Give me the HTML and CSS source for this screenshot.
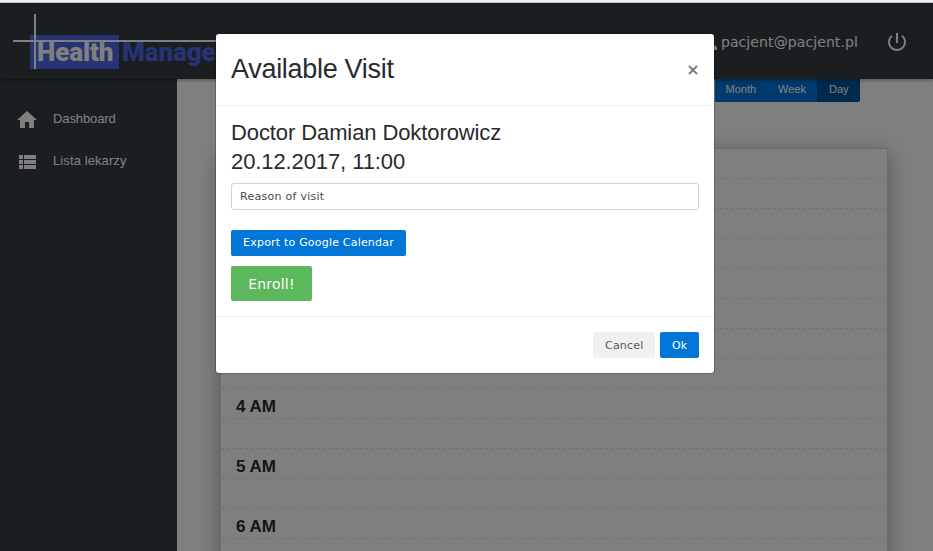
FILE: index.html
```html
<!DOCTYPE html>
<html lang="en">
<head>
<meta charset="utf-8">
<title>Health Manager</title>
<link rel="stylesheet" href="styles.css">
</head>
<body>
<div class="window-edge"></div>
<div class="app">
  <header class="topbar">
    <div class="brand"><span class="brand-box">Health</span><span class="brand-rest">Manager</span></div>
    <div class="account">
      <svg class="user-icon" viewBox="0 0 24 24"><path d="M12 12c2.2 0 4-1.800 4-4s-1.800-4-4-4-4 1.800-4 4 1.800 4 4 4zm0 2c-2.700 0-8 1.300-8 4v2h16v-2c0-2.700-5.300-4-8-4z"/></svg>
      <span class="email">pacjent@pacjent.pl</span>
      <svg class="power-icon" viewBox="0 0 24 24"><path d="M13 3h-2v10h2V3zm4.830 2.170l-1.420 1.420C17.990 7.860 19 9.810 19 12c0 3.870-3.130 7-7 7s-7-3.130-7-7c0-2.190 1.010-4.140 2.580-5.420L6.170 5.170C4.230 6.820 3 9.260 3 12c0 4.970 4.030 9 9 9s9-4.030 9-9c0-2.740-1.230-5.180-3.170-6.830z"/></svg>
    </div>
  </header>
  <div class="columns">
    <nav class="sidebar">
      <a class="nav-item"><svg viewBox="0 0 24 24"><path d="M10 20v-6h4v6h5v-8h3L12 3 2 12h3v8z"/></svg><span>Dashboard</span></a>
      <a class="nav-item"><svg viewBox="0 0 24 24"><path d="M4 14h4v-4H4v4zm0 5h4v-4H4v4zM4 9h4V5H4v4zm5 5h12v-4H9v4zm0 5h12v-4H9v4zM9 5v4h12V5H9z"/></svg><span class="wide">Lista lekarzy</span></a>
    </nav>
    <main class="content">
      <div class="views"><span class="view">Month</span><span class="view">Week</span><span class="view active">Day</span></div>
      <section class="calendar">
        <div class="hour">12 AM</div>
        <div class="hour">1 AM</div>
        <div class="hour">2 AM</div>
        <div class="hour">3 AM</div>
        <div class="hour">4 AM</div>
        <div class="hour">5 AM</div>
        <div class="hour">6 AM</div>
      </section>
    </main>
  </div>
  <div class="backdrop">
    <div class="dialog">
      <div class="dialog-head"><h1>Available Visit</h1><button class="close"><svg viewBox="0 0 10 10"><path d="M1 1l8 8M9 1l-8 8"/></svg></button></div>
      <div class="dialog-body">
        <h2>Doctor Damian Doktorowicz</h2>
        <h2>20.12.2017, 11:00</h2>
        <input class="reason" type="text" placeholder="Reason of visit">
        <button class="btn primary export">Export to Google Calendar</button>
        <button class="btn success">Enroll!</button>
      </div>
      <div class="dialog-foot"><button class="btn muted">Cancel</button><button class="btn primary">Ok</button></div>
    </div>
  </div>
</div>
</body>
</html>
```
FILE: styles.css
```css
* { box-sizing: border-box; }
body { margin: 0; height: 551px; overflow: hidden; font-family: "Liberation Sans", Arial, sans-serif; color: #292b2c; }
button, input { font-family: "DejaVu Sans", sans-serif; }
.window-edge { height: 3px; background: #f2f1f0; border-bottom: 1px solid #c9c4bf; }
.app { position: relative; height: 548px; background: #fff; overflow: hidden; }
.topbar { position: relative; z-index: 1; display: flex; justify-content: space-between; align-items: center; height: 76px; background: #353d42; box-shadow: 0 1px 4px rgba(0, 0, 0, .4); }

.brand { position: relative; display: flex; align-items: center; gap: 3px; margin: 22px 0 0 30px; height: 34px; font: 900 26px/34px Roboto, sans-serif; letter-spacing: -.1px; }
.brand-box { width: 89px; height: 34px; padding-left: 7px; background: #4c68e8; color: #fff; }
.brand-rest { color: #4c68e8; }
.brand::before { content: ""; position: absolute; left: -17px; top: 5px; width: 210px; height: 2px; background: #fff; }
.brand::after { content: ""; position: absolute; left: 4px; top: -21px; width: 2px; height: 55px; background: #fff; }

.account { display: flex; align-items: center; padding: 2px 24px 0 0; color: #fff; font: 14px "DejaVu Sans", sans-serif; }
.account svg { width: 24px; height: 24px; fill: #fff; }
.email { margin-right: 27px; letter-spacing: .1px; }

.columns { display: flex; height: 472px; }
.sidebar { width: 177px; padding-top: 20px; background: #353d42; }
.nav-item { display: flex; align-items: center; gap: 14px; height: 42px; padding-left: 15px; color: #fff; font-size: 13px; }
.nav-item svg { width: 24px; height: 24px; fill: #fff; }
.nav-item span { padding-bottom: 3px; letter-spacing: -.1px; }
.nav-item .wide { letter-spacing: .1px; }
.content { flex: 1; padding: 0 45px 0 43px; }
.views { display: flex; justify-content: flex-end; margin-right: 28px; height: 23px; font-size: 11px; line-height: 21px; color: #fff; }
.view { padding: 0 11px; background: #0275d8; }
.view.active { width: 43px; padding-left: 12px; background: #01549b; border-radius: 0 0 2px 0; }
.calendar { margin-top: 46px; border: 1px solid #d8d8d8; box-shadow: 0 5px 20px rgba(0, 0, 0, .35); background: #fff; }
.hour { height: 60px; padding: 0 15px; font-size: 17px; font-weight: bold; line-height: 35px; background: repeating-linear-gradient(90deg, #e0e0e0 0 3px, transparent 3px 6px) 0 29px / 100% 1px no-repeat, repeating-linear-gradient(90deg, #e0e0e0 0 3px, transparent 3px 6px) 0 59px / 100% 1px no-repeat; }

.backdrop { position: absolute; inset: 0; z-index: 2; padding-top: 31px; background: rgba(0, 0, 0, .5); }
.dialog { width: 498px; height: 339px; margin-left: 216px; background: #fff; border-radius: 3px; box-shadow: 0 0 0 1px rgba(0, 0, 0, .2); }
.dialog-head { display: flex; justify-content: space-between; align-items: center; height: 72px; padding: 0 15px; border-bottom: 1px solid #eceeef; }
h1, h2 { margin: 0; font-weight: normal; }
h1 { font-size: 27px; line-height: 36px; padding-bottom: 2px; letter-spacing: -.3px; }
h2 { font-size: 22px; line-height: 28px; letter-spacing: -.1px; }
h2 + h2 { margin-top: 1px; }
.close { width: 13px; height: 10px; padding: 0; border: 0; background: none; display: flex; justify-content: center; }
.close svg { width: 10px; height: 10px; fill: none; stroke: #777; stroke-width: 1.800; }
.dialog-body { display: flex; flex-direction: column; align-items: flex-start; height: 211px; padding: 13px 15px 0; border-bottom: 1px solid #eceeef; }
.reason { width: 100%; height: 27px; margin: 7px 0 20px; padding: 0 8px; border: 1px solid #d3d3d3; border-radius: 3px; font-size: 11px; letter-spacing: .27px; }
.reason::placeholder { color: #464a4c; opacity: 1; }
.btn { flex: none; height: 26px; padding: 0 12px; border: 0; border-radius: 2px; font-size: 11px; letter-spacing: .2px; white-space: nowrap; color: #fff; }
.primary { background: #0275d8; }
.dialog-foot .primary { width: 39px; }
.export { width: 175px; padding-bottom: 2px; }
.success { width: 81px; height: 35px; margin-top: 10px; padding: 0; font-size: 14px; background: #5cb85c; }
.muted { width: 62px; background: #f1f0ee; color: #55595c; }
.dialog-foot { display: flex; justify-content: flex-end; gap: 5px; padding: 15px; }
```
